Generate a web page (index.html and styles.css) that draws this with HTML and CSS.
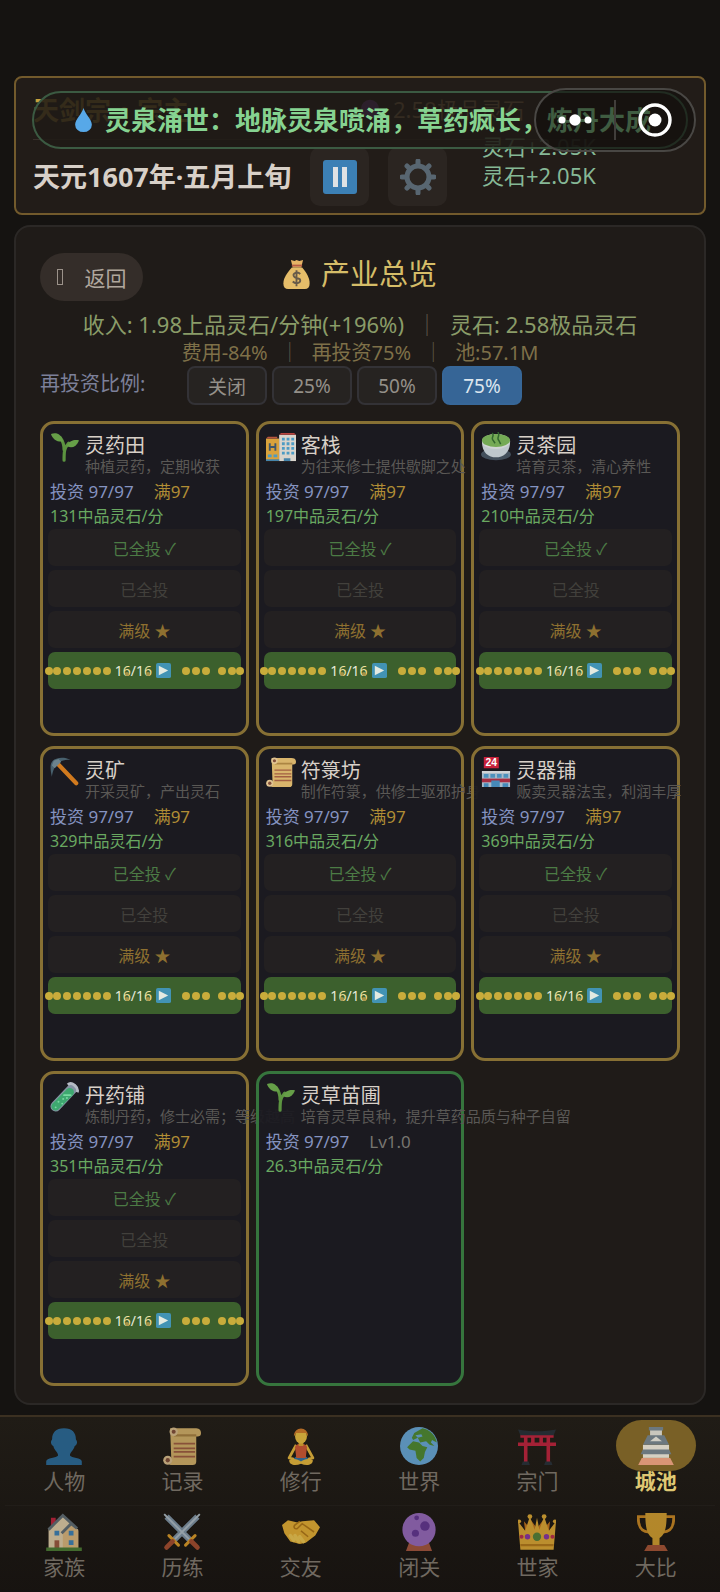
FILE: index.html
```html
<!DOCTYPE html>
<html lang="zh-CN">
<head>
    <meta charset="UTF-8">
    <meta name="viewport" content="width=device-width, initial-scale=1.0">
    <title>产业总览</title>
    <link rel="stylesheet" href="styles.css">
</head>
<body>
    <svg class="sprite" aria-hidden="true">
        <symbol id="i-herb" viewBox="0 0 32 32">
            <path d="M15 30c0-9 0-13 5-18M15 19c0-6-1-9-4-13" fill="none" stroke="#5c9440" stroke-width="3.4" stroke-linecap="round"/>
            <path d="M1 2c6-2 11 0 13 8C8 11 3 8 1 2z" fill="#669f48"/>
            <path d="M31 9c-5-1-10 0-13 6 5 3 10 1 13-6z" fill="#669f48"/>
        </symbol>
        <symbol id="i-hotel" viewBox="0 0 32 32">
            <path d="M0 7h14v24H0z" fill="#d9a23c"/>
            <path d="M0 7l2-2h10v2z" fill="#b9553f"/>
            <path d="M14 3h18v28H14z" fill="#d9d4cc"/>
            <path d="M14 3l2-2h14l2 2z" fill="#b9453f"/>
            <path d="M4 12v8M10 12v8M4 16h6" stroke="#3f566b" stroke-width="2" fill="none"/>
            <path d="M2 24h4v3H2zM8 24h4v3H8zM17 6h3v3h-3zM22 6h3v3h-3zM27 6h3v3h-3zM17 11h3v3h-3zM22 11h3v3h-3zM27 11h3v3h-3zM17 16h3v3h-3zM22 16h3v3h-3zM27 16h3v3h-3zM17 21h3v3h-3zM22 21h3v3h-3zM27 21h3v3h-3z" fill="#4c9bc4"/>
            <path d="M0 29h14v2H0zM19 28h7v3h-7z" fill="#4584ab"/>
        </symbol>
        <symbol id="i-tea" viewBox="0 0 32 32">
            <ellipse cx="16" cy="24" rx="16" ry="6" fill="#434f5b"/>
            <path d="M1 10c0 12 7 17 15 17s15-5 15-17z" fill="#bfc8cd"/>
            <ellipse cx="16" cy="10" rx="15" ry="8" fill="#d0d5d5"/>
            <ellipse cx="16" cy="9" rx="15" ry="7" fill="#74aa55"/>
            <path d="M12 1c3 3-2 5 1 8l2 3M18 0c3 4-2 6 1 9l2 4" stroke="#32662f" stroke-width="1.6" fill="none"/>
        </symbol>
        <symbol id="i-pick" viewBox="0 0 32 32">
            <path d="M9 8l19 20" stroke="#d17a1e" stroke-width="4.4" stroke-linecap="round"/>
            <path d="M2 21C0 12 0 7 3 4S14-1 22 3C13 3 9 5 7 8s-4 6-5 13z" fill="#48616e"/>
            <path d="M4 4l5-2 3 3-7 7-3-3z" fill="#6c838d"/>
        </symbol>
        <symbol id="i-scroll" viewBox="0 0 32 32">
            <path d="M6 1h21c3 0 5 1 5 4s-2 3-4 3v21c0 2-1 3-3 3H4c2 0 3-1 3-4z" fill="#d9b56c"/>
            <path d="M9 8h19V6H12z" fill="#ac8543"/>
            <circle cx="9" cy="4" r="3.5" fill="#e0c391"/><circle cx="9" cy="4" r="1.7" fill="#83503a"/>
            <circle cx="4" cy="28" r="3.8" fill="#e0c391"/><circle cx="4" cy="28" r="1.8" fill="#83503a"/>
            <path d="M9 14h18M9 18h18M9 21h18M9 25h18" stroke="#a35f42" stroke-width="1.5"/>
        </symbol>
        <symbol id="i-shop" viewBox="0 0 32 32">
            <path d="M1 15h30v17H1z" fill="#a9bccb"/>
            <path d="M1 15h30v2H1z" fill="#d3d5d7"/>
            <path d="M3 18h5v4H3zM10 18h5v4h-5zM17 18h5v4h-5zM24 18h5v4h-5z" fill="#4d91bd"/>
            <path d="M1 23h30v4H1z" fill="#a82d42"/>
            <path d="M3 28h5v4H3zM11 25h9v7h-9zM23 28h6v4h-6z" fill="#4689b8"/>
            <rect x="3" y="0" width="16" height="12" fill="#c8213a"/>
            <text x="11" y="10" text-anchor="middle" class="sign">24</text>
        </symbol>
        <symbol id="i-tube" viewBox="0 0 32 32">
            <path d="M6 26L24 7" stroke="#8593a3" stroke-width="11" stroke-linecap="round"/>
            <path d="M6 26L21 11" stroke="#3ea870" stroke-width="9" stroke-linecap="round"/>
            <path d="M19 3c4-4 12 3 10 8" fill="none" stroke="#b6bbc5" stroke-width="3"/>
            <path d="M15 14h7M9 21h.1M13 23h.1M6 27h.1M14 18h.1M18 17h.1" stroke="#78d9a0" stroke-width="2" stroke-linecap="round"/>
        </symbol>
        <symbol id="i-person" viewBox="0 0 32 32">
            <path d="M16 1c-7 0-10 4-10 9 0 1-1 1-1 3s2 3 2 3c1 4 4 5 4 8-1 2-10 2-10 5v3h30v-3c0-3-9-3-10-5 0-3 3-4 4-8 0 0 2-1 2-3s-1-2-1-3c0-5-3-9-10-9z" fill="#2a6d9e"/>
        </symbol>
        <symbol id="i-yoga" viewBox="0 0 32 32">
            <path d="M12 15l-6 11 7 2 1-3M20 15l6 11-7 2-1-3" fill="none" stroke="#f0be3e" stroke-width="2.4" stroke-linejoin="round"/>
            <path d="M10 28c-1-5 13-5 12 0l-6 3z" fill="#3475a8"/>
            <path d="M6 28c4-2 7-1 10 1 3-2 6-3 10-1 0 4-5 5-10 3-5 2-10 1-10-3z" fill="#f0be3e"/>
            <path d="M11 17c0-4 10-4 10 0l-1 9h-8z" fill="#d75a35"/>
            <path d="M14 11h4v5h-4z" fill="#e7ad32"/>
            <ellipse cx="16" cy="8" rx="5" ry="6" fill="#f3c742"/>
            <path d="M10 8c0-9 12-9 12 0l-2-3h-8z" fill="#d9802a"/>
        </symbol>
        <symbol id="i-globe" viewBox="0 0 32 32">
            <circle cx="16" cy="16" r="16" fill="#6aaee0"/>
            <path d="M8 15l3-3 5 1 3 3 4 1-2 4-1 5-3 3-3-3-1-6-5-1-2-2z" fill="#4f8e34"/>
            <path d="M10 9l2-4 7-4c6 1 11 6 12 12l-4-2-1 2 3 3-4-1-3-3-5 1-2-4-4 2z" fill="#4f8e34"/>
            <path d="M13 7l5-1 1 2-4 1z" fill="#6aaee0"/>
        </symbol>
        <symbol id="i-torii" viewBox="0 0 32 32">
            <path d="M5 8h3v22H5zM24 8h3v22h-3zM0 13h32v3H0zM2 6h28v3H2zM11 7h3v8h-3zM18 7h3v8h-3z" fill="#c6233f"/>
            <path d="M0 2c10 2 22 2 32 0l-2 5H2zM4 29h5l1 3H3zM23 29h5l1 3h-7z" fill="#27313a"/>
        </symbol>
        <symbol id="i-castle" viewBox="0 0 32 32">
            <path d="M4 26h24l3 6H1z" fill="#f2a38a"/>
            <path d="M5 15h22v11H5z" fill="#ecedeb"/>
            <path d="M11 2h10v7H11z" fill="#dde1e3"/>
            <path d="M10 0h12v3H10zM9 7h14l4 8H5zM5 19h22l2 4H3z" fill="#697f96"/>
            <path d="M11 12l5-4 5 4z" fill="#e6eaec"/>
        </symbol>
        <symbol id="i-house" viewBox="0 0 32 32">
            <path d="M5 4h4v7H5z" fill="#c2233d"/>
            <path d="M3 13L15 2l13 12v16H3z" fill="#e6d3ad"/>
            <path d="M15 16l6-7 7 6v15H15z" fill="#e2bd82"/>
            <path d="M3 14L15 2l12 11-5-4-8 8" fill="none" stroke="#637078" stroke-width="2.4"/>
            <path d="M8 15h4v4H8zM20 15h4v4h-4zM20 23h4v4h-4z" fill="#3d86bd"/>
            <path d="M8 23h4v7H8z" fill="#a05b42"/>
            <path d="M1 29h30v3H1z" fill="#4d8035"/>
        </symbol>
        <symbol id="i-swords" viewBox="0 0 32 32">
            <path d="M3 3l20 20M29 3L9 23" stroke="#8298ab" stroke-width="5"/>
            <path d="M1 1l21 21M31 1L10 22" stroke="#b4c3cd" stroke-width="1.6"/>
            <path d="M19 27l8-8M5 19l8 8" stroke="#e3a029" stroke-width="2.6" stroke-linecap="round"/>
            <path d="M24 24l5 5M8 24l-5 5" stroke="#a94f30" stroke-width="4" stroke-linecap="round"/>
        </symbol>
        <symbol id="i-hands" viewBox="0 0 32 32">
            <path d="M0 10l5-4 8 2 4-1 10-1 5 6-4 7-8 6-5 1-8-2-5-7z" fill="#edb535"/>
            <path d="M7 19l3 4M11 19l3 5M15 20l3 4" stroke="#f5cd53" stroke-width="3" stroke-linecap="round"/>
            <path d="M27 16L17 9l-4 4c-2 1-4-1-2-3l4-3M22 20l-6-5" fill="none" stroke="#b67c18" stroke-width="1.3"/>
        </symbol>
        <symbol id="i-orb" viewBox="0 0 32 32">
            <path d="M5 32l3-8h16l3 8z" fill="#a9583f"/>
            <circle cx="16" cy="14" r="14" fill="#9b6dc3"/>
            <circle cx="21" cy="11" r="4" fill="#663798"/><circle cx="13" cy="17" r="3" fill="#663798"/><circle cx="14" cy="4" r="2" fill="#663798"/>
        </symbol>
        <symbol id="i-crown" viewBox="0 0 32 32">
            <path d="M6 15l-1-8 6 7 0-8 5 7 5-7v8l6-7-1 9z" fill="#c9791e"/>
            <path d="M2 31L0 7l6 8 4-12 4 11 2-10 2 10 4-11 4 12 6-8-2 24z" fill="#e4ad35"/>
            <path d="M2 27h28" stroke="#bb7e1b" stroke-width="2"/>
            <circle cx="10" cy="3" r="2" fill="#e4ad35"/><circle cx="22" cy="3" r="2" fill="#e4ad35"/><circle cx="1" cy="7" r="1.6" fill="#e4ad35"/><circle cx="31" cy="7" r="1.6" fill="#e4ad35"/>
            <circle cx="16" cy="20" r="3.5" fill="#56863b"/><circle cx="8" cy="20" r="2.3" fill="#8e36a8"/><circle cx="24" cy="20" r="2.3" fill="#8e36a8"/><circle cx="3" cy="20" r="1.7" fill="#c13050"/><circle cx="29" cy="20" r="1.7" fill="#c13050"/>
        </symbol>
        <symbol id="i-cup" viewBox="0 0 32 32">
            <path d="M8 3H1c0 8 2 13 9 13M24 3h7c0 8-2 13-9 13" fill="none" stroke="#cf8c24" stroke-width="2.4"/>
            <path d="M7 0h18c0 11-1 18-6 21v7h-6v-7C8 18 7 11 7 0z" fill="#d9a431"/>
            <path d="M9 27h14l3 5H6z" fill="#ab5637"/>
        </symbol>
        <symbol id="i-play" viewBox="0 0 16 16">
            <rect width="16" height="16" rx="2" fill="#4293b4"/>
            <path d="M3 3l10 5-10 5z" fill="#e3eae1"/>
        </symbol>
    </svg>

    <div class="toast" role="status">
        <svg class="drop" viewBox="0 0 20 28"><path d="M10 1c2 7 9 12 9 18a9 8 0 0 1-18 0C1 13 8 8 10 1z" fill="#57a8e8"/></svg>
        <span>灵泉涌世：地脉灵泉喷涌，草药疯长，炼丹大成</span>
    </div>

    <div class="capsule">
        <button class="capsule-menu" aria-label="更多">
            <svg viewBox="0 0 36 12"><circle cx="5" cy="6" r="3.5"/><circle cx="18" cy="6" r="5.7"/><circle cx="31" cy="6" r="3.5"/></svg>
        </button>
        <button class="capsule-close" aria-label="关闭">
            <svg viewBox="0 0 34 34"><circle cx="17" cy="17" r="15" fill="none" stroke="#fff" stroke-width="3.4"/><circle cx="17" cy="17" r="6.5"/></svg>
        </button>
    </div>

    <header class="header">
        <div class="header-top">
            <h1 class="sect">天剑宗·宗主</h1>
            <span class="wealth">
                <svg class="gem" viewBox="0 0 24 24"><circle cx="12" cy="12" r="10" fill="#8f44c4"/></svg>
                2.58极品灵石
            </span>
        </div>
        <div class="header-time">
            <span class="date">天元1607年·五月上旬</span>
            <button class="square" aria-label="暂停">
                <svg viewBox="0 0 34 34"><rect width="34" height="34" rx="3" fill="#3c80b5"/><path d="M10 7h5v20h-5zM19 7h5v20h-5z" fill="#dfe2e4"/></svg>
            </button>
            <button class="square" aria-label="设置">
                <svg class="gear" viewBox="-18 -18 36 36">
                    <path d="M0-16v4M0 16v-4M-16 0h4M16 0h-4M-11-11l3 3M11 11l-3-3M-11 11l3-3M11-11l-3 3" stroke="#586671" stroke-width="5" stroke-linecap="round"/>
                    <circle r="11" fill="none" stroke="#586671" stroke-width="5"/>
                </svg>
            </button>
        </div>
        <div class="gains">
            <span>灵石+2.05K</span>
            <span>灵石+2.05K</span>
        </div>
    </header>

    <main class="panel">
        <div class="panel-head">
            <button class="back"><i class="back-mark"></i>返回</button>
            <h2 class="title">
                <svg class="bag" viewBox="0 0 28 32">
                    <path d="M8 1l4 1 2-1 3 1 4-1-2 8H10z" fill="#e6b466"/>
                    <path d="M9 9h11c5 6 8 11 8 17 0 4-2 6-5 6H5c-3 0-5-2-5-6 0-6 4-11 9-17z" fill="#e5bd69"/>
                    <path d="M9 7h11" stroke="#b55b45" stroke-width="2"/>
                    <path d="M18 16c-3-3-8-1-7 2 1 4 7 1 7 5 0 3-5 4-8 1M14 12v17" fill="none" stroke="#665a49" stroke-width="2"/>
                </svg>
                产业总览
            </h2>
        </div>
        <p class="income">收入: 1.98上品灵石/分钟(+196%)<span class="bar">│</span>灵石: 2.58极品灵石</p>
        <p class="costs">费用-84%<span class="bar">│</span>再投资75%<span class="bar">│</span>池:57.1M</p>
        <div class="ratio">
            <span class="ratio-label">再投资比例:</span>
            <button>关闭</button>
            <button>25%</button>
            <button>50%</button>
            <button class="on">75%</button>
        </div>

        <div class="cards">
            <section class="card">
                <div class="card-head">
                    <svg><use href="#i-herb"/></svg>
                    <div><h3>灵药田</h3><p>种植灵药，定期收获</p></div>
                </div>
                <div class="stats"><span class="invest">投资 97/97</span><span class="full">满97</span></div>
                <div class="rate">131中品灵石/分</div>
                <button class="act done">已全投 ✓</button>
                <button class="act off">已全投</button>
                <button class="act max">满级 ★</button>
                <button class="act run"></button>
            </section>
            <section class="card">
                <div class="card-head">
                    <svg><use href="#i-hotel"/></svg>
                    <div><h3>客栈</h3><p>为往来修士提供歇脚之处</p></div>
                </div>
                <div class="stats"><span class="invest">投资 97/97</span><span class="full">满97</span></div>
                <div class="rate">197中品灵石/分</div>
                <button class="act done">已全投 ✓</button>
                <button class="act off">已全投</button>
                <button class="act max">满级 ★</button>
                <button class="act run"></button>
            </section>
            <section class="card">
                <div class="card-head">
                    <svg><use href="#i-tea"/></svg>
                    <div><h3>灵茶园</h3><p>培育灵茶，清心养性</p></div>
                </div>
                <div class="stats"><span class="invest">投资 97/97</span><span class="full">满97</span></div>
                <div class="rate">210中品灵石/分</div>
                <button class="act done">已全投 ✓</button>
                <button class="act off">已全投</button>
                <button class="act max">满级 ★</button>
                <button class="act run"></button>
            </section>
            <section class="card">
                <div class="card-head">
                    <svg><use href="#i-pick"/></svg>
                    <div><h3>灵矿</h3><p>开采灵矿，产出灵石</p></div>
                </div>
                <div class="stats"><span class="invest">投资 97/97</span><span class="full">满97</span></div>
                <div class="rate">329中品灵石/分</div>
                <button class="act done">已全投 ✓</button>
                <button class="act off">已全投</button>
                <button class="act max">满级 ★</button>
                <button class="act run"></button>
            </section>
            <section class="card">
                <div class="card-head">
                    <svg><use href="#i-scroll"/></svg>
                    <div><h3>符箓坊</h3><p>制作符箓，供修士驱邪护身</p></div>
                </div>
                <div class="stats"><span class="invest">投资 97/97</span><span class="full">满97</span></div>
                <div class="rate">316中品灵石/分</div>
                <button class="act done">已全投 ✓</button>
                <button class="act off">已全投</button>
                <button class="act max">满级 ★</button>
                <button class="act run"></button>
            </section>
            <section class="card">
                <div class="card-head">
                    <svg><use href="#i-shop"/></svg>
                    <div><h3>灵器铺</h3><p>贩卖灵器法宝，利润丰厚</p></div>
                </div>
                <div class="stats"><span class="invest">投资 97/97</span><span class="full">满97</span></div>
                <div class="rate">369中品灵石/分</div>
                <button class="act done">已全投 ✓</button>
                <button class="act off">已全投</button>
                <button class="act max">满级 ★</button>
                <button class="act run"></button>
            </section>
            <section class="card">
                <div class="card-head">
                    <svg><use href="#i-tube"/></svg>
                    <div><h3>丹药铺</h3><p>炼制丹药，修士必需；等级越高</p></div>
                </div>
                <div class="stats"><span class="invest">投资 97/97</span><span class="full">满97</span></div>
                <div class="rate">351中品灵石/分</div>
                <button class="act done">已全投 ✓</button>
                <button class="act off">已全投</button>
                <button class="act max">满级 ★</button>
                <button class="act run"></button>
            </section>
            <section class="card green">
                <div class="card-head">
                    <svg><use href="#i-herb"/></svg>
                    <div><h3>灵草苗圃</h3><p>培育灵草良种，提升草药品质与种子自留</p></div>
                </div>
                <div class="stats"><span class="invest">投资 97/97</span><span class="level">Lv1.0</span></div>
                <div class="rate">26.3中品灵石/分</div>
            </section>
        </div>
    </main>

    <nav class="nav">
        <div class="nav-row">
            <a href="#"><span class="nav-icon"><svg><use href="#i-person"/></svg></span>人物</a>
            <a href="#"><span class="nav-icon"><svg><use href="#i-scroll"/></svg></span>记录</a>
            <a href="#"><span class="nav-icon"><svg><use href="#i-yoga"/></svg></span>修行</a>
            <a href="#"><span class="nav-icon"><svg><use href="#i-globe"/></svg></span>世界</a>
            <a href="#"><span class="nav-icon"><svg><use href="#i-torii"/></svg></span>宗门</a>
            <a href="#" class="active"><span class="nav-icon"><svg><use href="#i-castle"/></svg></span>城池</a>
        </div>
        <div class="nav-row">
            <a href="#"><span class="nav-icon"><svg><use href="#i-house"/></svg></span>家族</a>
            <a href="#"><span class="nav-icon"><svg><use href="#i-swords"/></svg></span>历练</a>
            <a href="#"><span class="nav-icon"><svg><use href="#i-hands"/></svg></span>交友</a>
            <a href="#"><span class="nav-icon"><svg><use href="#i-orb"/></svg></span>闭关</a>
            <a href="#"><span class="nav-icon"><svg><use href="#i-crown"/></svg></span>世家</a>
            <a href="#"><span class="nav-icon"><svg><use href="#i-cup"/></svg></span>大比</a>
        </div>
    </nav>

    <script>
        // Progress row with coins is the same on every running industry
        const coins = n => '<i class="coin"></i>'.repeat(n);
        document.querySelectorAll('.run').forEach(function(btn) {
            btn.innerHTML =
                '<span class="coins">' + coins(7) + '</span>' +
                '<span class="count">1<b>6</b>/1<b>6</b></span>' +
                '<svg class="play"><use href="#i-play"/></svg>' +
                '<span class="coins">' + coins(3) + '</span>' +
                '<span class="coins">' + coins(3) + '</span>';
        });
    </script>
</body>
</html>
```

FILE: styles.css
```css
* {
    margin: 0;
    padding: 0;
    box-sizing: border-box;
}

body {
    position: relative;
    min-height: 100vh;
    padding-top: 76px;
    display: flex;
    flex-direction: column;
    background: #151311;
    color: #d8d0c8;
    font-family: "Noto Sans", "Noto Sans CJK SC", sans-serif;
    overflow-x: hidden;
}

button {
    border: none;
    font-family: inherit;
    cursor: pointer;
}

svg {
    display: block;
    flex-shrink: 0;
}

.sprite {
    position: absolute;
    width: 0;
    height: 0;
}

.sign {
    font: bold 11px "Liberation Sans", sans-serif;
    fill: #fff;
}

/* Floating layers */
.toast {
    position: absolute;
    z-index: 3;
    top: 91px;
    left: 32px;
    right: 32px;
    height: 58px;
    padding-left: 40px;
    display: flex;
    align-items: center;
    gap: 12px;
    border: 2px solid #3b5a42;
    border-radius: 29px;
    background: rgba(31, 26, 22, 0.88);
    color: #86d391;
    font-size: 26px;
    font-weight: 700;
    line-height: 34px;
    white-space: nowrap;
}

.drop {
    width: 19px;
    height: 26px;
}

.capsule {
    position: absolute;
    z-index: 4;
    top: 88px;
    right: 24px;
    width: 162px;
    height: 64px;
    display: flex;
    align-items: center;
    border: 2px solid #494744;
    border-radius: 32px;
    background: rgba(16, 14, 12, 0.6);
}

.capsule button {
    flex: 1;
    height: 40px;
    display: flex;
    align-items: center;
    justify-content: center;
    background: none;
}

.capsule button + button {
    border-left: 2px solid #413e3b;
}

.capsule svg {
    fill: #fff;
}

.capsule-menu svg {
    width: 36px;
    height: 12px;
}

.capsule-close svg {
    width: 34px;
    height: 34px;
}

/* Header */
.header {
    position: relative;
    margin: 0 14px 10px;
    padding: 14px 17px 7px;
    border: 2px solid #725a2c;
    border-radius: 8px;
    background: #221c18;
}

.header-top {
    height: 48px;
    margin-bottom: 7px;
    padding-bottom: 14px;
    display: flex;
    align-items: center;
    gap: 170px;
    border-bottom: 1px solid #38312b;
}

.sect {
    font-family: "Noto Sans CJK SC", sans-serif;
    font-size: 26px;
    line-height: 34px;
    color: #c8a03c;
}

.wealth {
    display: flex;
    align-items: center;
    gap: 12px;
    font-size: 22px;
    line-height: 34px;
    color: #c8a070;
}

.gem {
    width: 22px;
    height: 22px;
}

.header-time {
    display: flex;
    align-items: center;
    gap: 19px;
}

.date {
    font-size: 27px;
    font-weight: 700;
    line-height: 34px;
}

.square {
    width: 59px;
    height: 59px;
    display: flex;
    align-items: center;
    justify-content: center;
    border-radius: 10px;
    background: #2b2521;
}

.square svg {
    width: 34px;
    height: 34px;
}

.square .gear {
    width: 36px;
    height: 36px;
}

.gains {
    position: absolute;
    top: 54px;
    left: 466px;
    display: flex;
    flex-direction: column;
    color: #86b896;
    font-size: 22px;
    line-height: 29px;
}

/* Panel */
.panel {
    margin: 0 14px 10px;
    padding: 26px 24px 17px;
    border: 2px solid #2b2826;
    border-radius: 16px;
    background: #1f1b18;
}

.panel-head {
    display: grid;
    grid-template-columns: 1fr auto 1fr;
    align-items: start;
    height: 48px;
}

.back {
    justify-self: start;
    width: 103px;
    height: 48px;
    display: flex;
    align-items: center;
    justify-content: center;
    gap: 22px;
    border-radius: 24px;
    background: #342d29;
    color: #b0a79e;
    font-size: 21px;
}

.back-mark {
    width: 6px;
    height: 16px;
    border: 1px solid #9b928a;
}

.title {
    display: flex;
    align-items: center;
    gap: 11px;
    color: #d5bd68;
    font-size: 29px;
    font-weight: 400;
    line-height: 42px;
}

.bag {
    width: 27px;
    height: 30px;
}

.income,
.costs {
    text-align: center;
    white-space: nowrap;
}

.income {
    margin-top: 8px;
    color: #8a9c68;
    font-size: 22px;
    line-height: 30px;
}

.costs {
    color: #7e7048;
    font-size: 20px;
    line-height: 27px;
}

.bar {
    margin: 0 12px;
    color: #5f5948;
}

.ratio {
    display: flex;
    align-items: center;
    gap: 5px;
}

.ratio-label {
    align-self: flex-start;
    width: 142px;
    color: #7c8099;
    font-size: 20px;
    line-height: 36px;
}

.ratio button {
    width: 80px;
    height: 39px;
    border: 2px solid #333236;
    border-radius: 8px;
    background: #262321;
    color: #949089;
    font-size: 19px;
}

.ratio .on {
    border-color: #376798;
    background: #366596;
    color: #dce6ee;
}

/* Industry cards */
.cards {
    margin-top: 16px;
    display: grid;
    grid-template-columns: repeat(3, minmax(0, 1fr));
    grid-auto-rows: 315px;
    gap: 10px 7px;
}

.card {
    padding: 8px 5px;
    display: flex;
    flex-direction: column;
    border: 3px solid #877034;
    border-radius: 14px;
    background: rgba(28, 27, 33, 0.94);
}

.card.green {
    border-color: #36753d;
}

.card-head {
    height: 48px;
    display: flex;
    gap: 5px;
    padding-left: 2px;
}

.card-head svg {
    width: 30px;
    height: 30px;
}

.card-head h3 {
    font-size: 20px;
    font-weight: 400;
    line-height: 27px;
}

.card-head p {
    color: #5a5855;
    font-size: 15px;
    line-height: 14px;
    white-space: nowrap;
}

.stats,
.rate {
    padding-left: 2px;
    line-height: 24px;
}

.stats {
    display: flex;
    gap: 20px;
    font-size: 17px;
}

.invest {
    color: #8593c0;
}

.full {
    color: #b08d35;
}

.level {
    color: #77756f;
}

.rate {
    margin-bottom: 1px;
    color: #69a860;
    font-size: 16px;
}

.act {
    height: 37px;
    flex-shrink: 0;
    margin-bottom: 4px;
    border-radius: 7px;
    background: #232021;
    font-size: 16px;
}

.done {
    color: #4c7b45;
}

.off {
    color: #42403c;
}

.max {
    color: #8e7030;
}

.run {
    display: flex;
    align-items: center;
    justify-content: center;
    background: #3c602d;
    color: #e6eadb;
    font-size: 14px;
}

.coins {
    display: flex;
    gap: 2px;
}

.coin {
    width: 8px;
    height: 8px;
    flex-shrink: 0;
    border-radius: 50%;
    background: #c9ac3b;
}

/* outermost coins sit half over their neighbour */
.coins:first-child .coin:first-child {
    margin-right: -2px;
}

.coins:last-child .coin:last-child {
    margin-left: -2px;
}

.count {
    margin: 0 4px;
}

.count b {
    position: relative;
    color: #eee0a0;
    font-weight: 400;
}

.count b::after {
    content: "";
    position: absolute;
    left: 2px;
    bottom: 4px;
    width: 4px;
    height: 4px;
    border-radius: 50%;
    background: #a59247;
}

.play {
    width: 15px;
    height: 15px;
    margin-right: 11px;
}

.coins + .coins {
    margin-left: 8px;
}

/* Bottom navigation */
.nav {
    margin-top: auto;
    padding: 3px 5px 6px;
    border-top: 2px solid #3b3021;
    background: linear-gradient(#201c16, #171310);
}

.nav-row {
    display: grid;
    grid-template-columns: repeat(6, 1fr);
    padding-bottom: 2px;
}

.nav-row + .nav-row {
    padding-bottom: 0;
    border-top: 1px solid #211d19;
}

.nav a {
    height: 83px;
    display: flex;
    flex-direction: column;
    align-items: center;
    color: #706960;
    font-size: 21px;
    line-height: 20px;
    text-decoration: none;
}

.nav-icon {
    width: 80px;
    height: 51px;
    display: flex;
    align-items: center;
    justify-content: center;
    border-radius: 26px;
}

.nav-icon svg {
    width: 38px;
    height: 38px;
    opacity: 0.8;
}

.nav .active {
    color: #dfc873;
    font-weight: 700;
}

.active .nav-icon {
    background: #796026;
}
```
